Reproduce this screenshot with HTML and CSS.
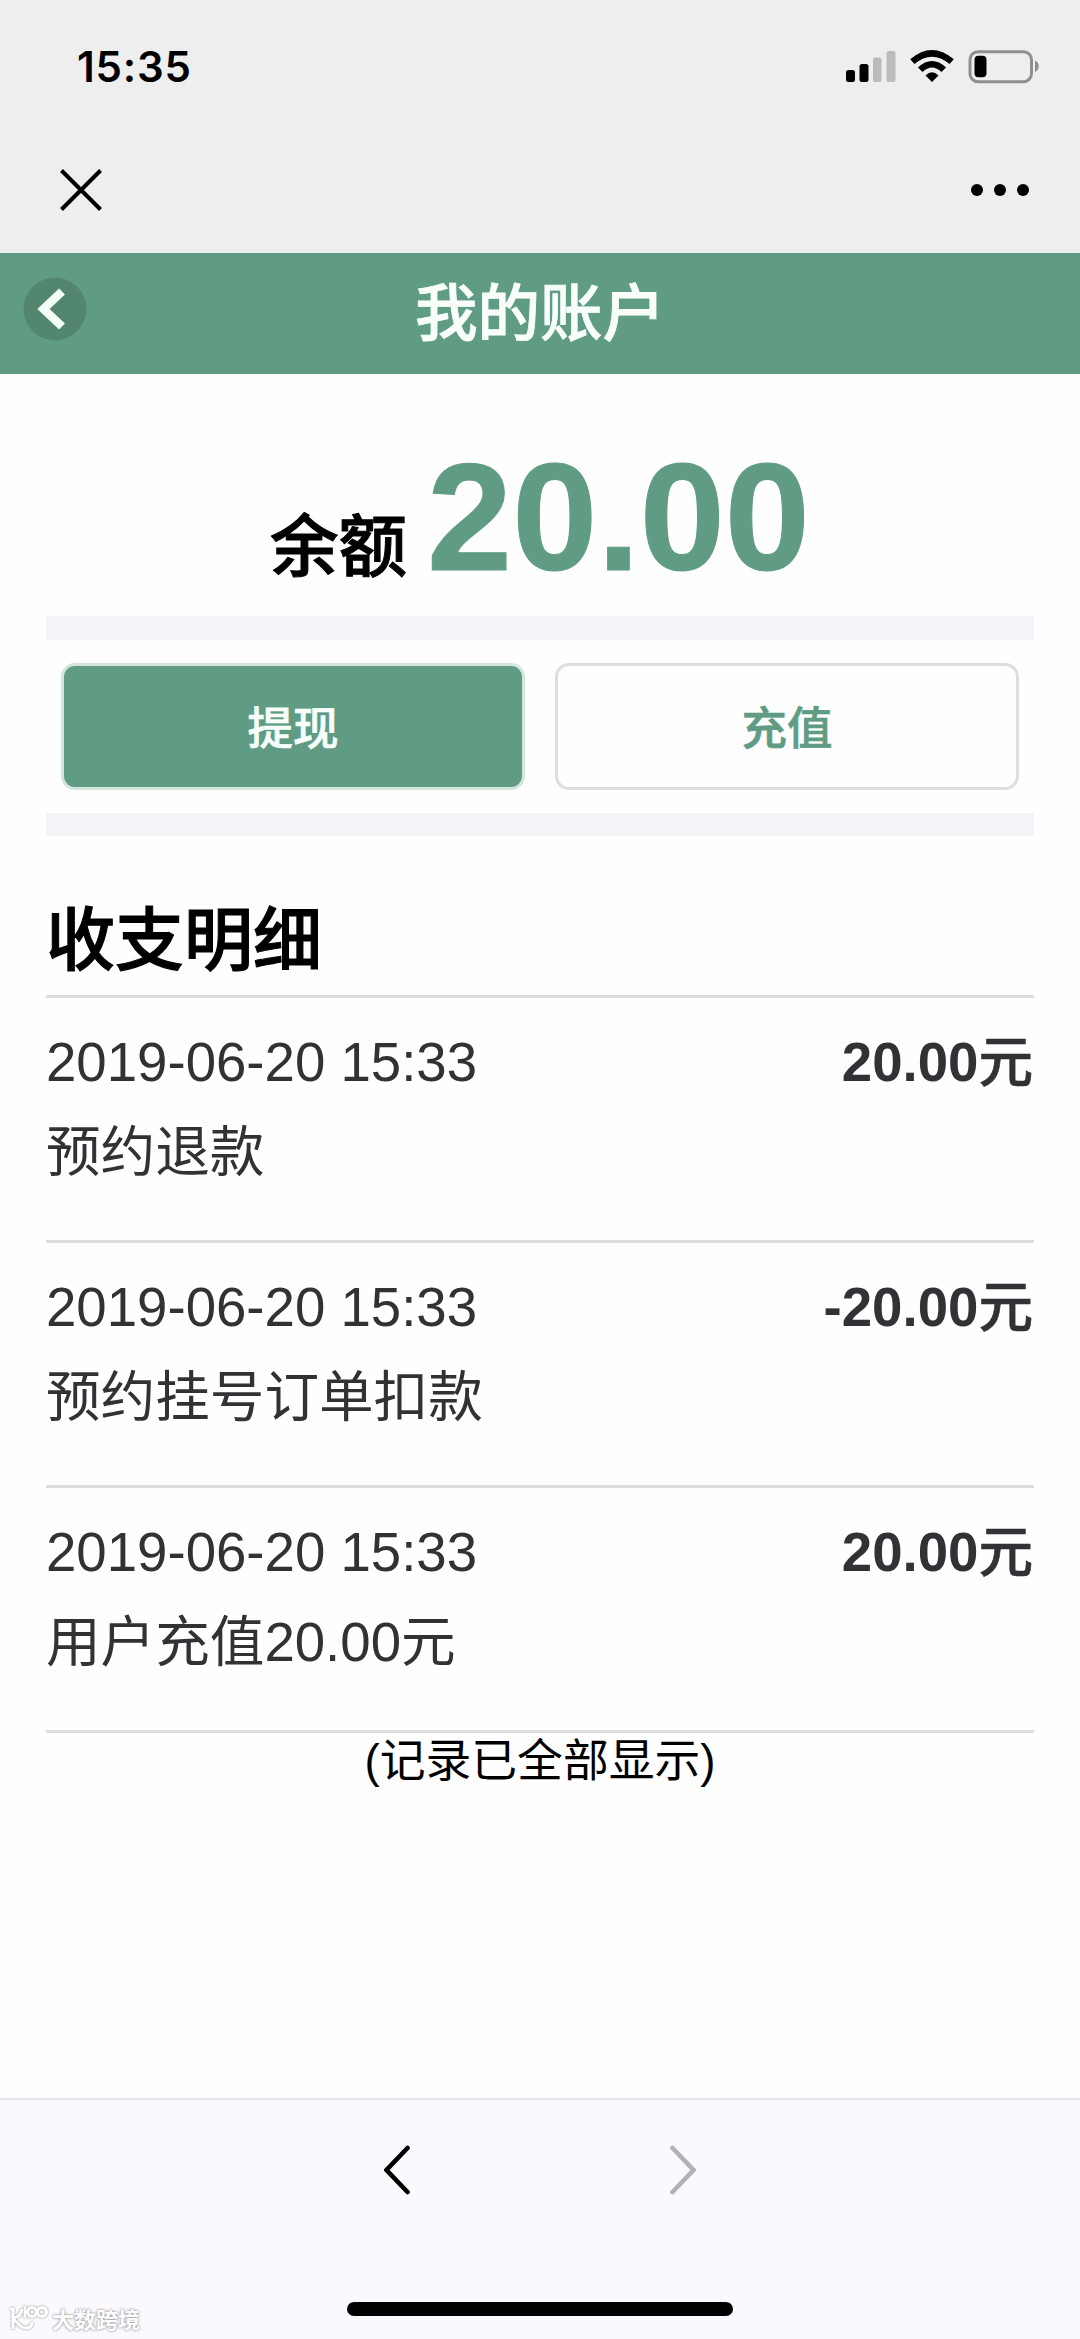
FILE: index.html
```html
<!DOCTYPE html>
<html lang="zh-CN">
<head>
<meta charset="utf-8">
<title>我的账户</title>
<link rel="stylesheet" href="styles.css">
</head>
<body>
<div class="screen">
  <div class="statusbar">
    <span class="clock">15:35</span>
    <svg class="status-icons" width="196" height="36" viewBox="0 0 196 36">
      <rect x="2" y="21" width="9" height="12" rx="2.5"/>
      <rect x="15.500" y="15" width="9" height="18" rx="2.500"/>
      <rect x="29" y="8.500" width="8.500" height="24.500" rx="2" fill="#bcbcbc"/>
      <rect x="42.500" y="2" width="9" height="31" rx="2" fill="#bcbcbc"/>
      <path d="M66.200 10.300Q88 -8.300 109.800 10.300L105.500 15Q88 0.500 70.500 15Z"/>
      <path d="M74 18.500Q88 5.600 102 18.500L97.500 23Q88 14 78.500 23Z"/>
      <path d="M81.500 26.500Q88 20 94.500 26.500L88 33Z"/>
      <rect x="126" y="2.700" width="61.500" height="30" rx="8" fill="none" stroke="#8f8f8f" stroke-width="3"/>
      <rect x="130.500" y="6.800" width="12" height="21.500" rx="4"/>
      <path d="M191 11.500C196 13.500 196 21 191 23Z" fill="#8f8f8f"/>
    </svg>
  </div>
  <div class="navbar">
    <svg width="44" height="44" viewBox="0 0 44 44"><path d="M2.500 2.500L41.500 41.500M41.500 2.500L2.500 41.500" fill="none" stroke="#000" stroke-width="4"/></svg>
    <svg width="60" height="14" viewBox="0 0 60 14"><circle cx="7" cy="7" r="6"/><circle cx="30" cy="7" r="6"/><circle cx="53" cy="7" r="6"/></svg>
  </div>
  <header class="titlebar">
    <svg class="back" width="64" height="64" viewBox="0 0 64 64"><circle cx="32" cy="32" r="31.500" fill="#52866f"/><path d="M39 14.500L20.500 32L39 49.500" fill="none" stroke="#f5fff9" stroke-width="8.500"/></svg>
    <h1 class="title">我的账户</h1>
  </header>
  <main class="content">
    <div class="balance"><span class="balance-label">余额</span><span class="balance-value">20.00</span></div>
    <div class="actions">
      <button class="btn btn-primary">提现</button>
      <button class="btn">充值</button>
    </div>
    <h2 class="section-title">收支明细</h2>
    <ul class="records">
      <li class="record"><div class="record-top"><span>2019-06-20 15:33</span><b>20.00<span class="unit">元</span></b></div><div class="record-desc">预约退款</div></li>
      <li class="record"><div class="record-top"><span>2019-06-20 15:33</span><b>-20.00<span class="unit">元</span></b></div><div class="record-desc">预约挂号订单扣款</div></li>
      <li class="record"><div class="record-top"><span>2019-06-20 15:33</span><b>20.00<span class="unit">元</span></b></div><div class="record-desc">用户充值20.00元</div></li>
    </ul>
    <p class="end">(记录已全部显示)</p>
  </main>
  <footer class="toolbar">
    <div class="arrows">
      <svg width="26" height="50" viewBox="0 0 26 50"><path d="M23.500 3L2.500 25L23.500 47" fill="none" stroke="#000" stroke-width="4.600" stroke-linecap="round"/></svg>
      <svg width="26" height="50" viewBox="0 0 26 50"><path d="M2.500 3L23.500 25L2.500 47" fill="none" stroke="#b3b1b4" stroke-width="4.600" stroke-linecap="round"/></svg>
    </div>
    <div class="home"></div>
    <div class="watermark">
      <svg width="40" height="28" viewBox="0 0 40 28" fill="none" stroke="#fff" stroke-width="3"><path d="M1 5H4V25M13 5Q12 13 4 14Q11 24 17 24T23 18M16 2V14"/><circle cx="23" cy="8" r="4.500"/><circle cx="33" cy="8" r="4.500"/></svg>
      <span>大数跨境</span>
    </div>
  </footer>
</div>
</body>
</html>
```
FILE: styles.css
```css
* { box-sizing: border-box; }
body { margin: 0; background: #fefefe; color: #000; font-family: "Liberation Sans", "Noto Sans CJK SC", sans-serif; }
h1, h2, p, ul { margin: 0; padding: 0; }
svg { display: block; flex: none; }
.screen { width: 1080px; height: 2339px; display: flex; flex-direction: column; overflow: hidden; }
.statusbar { height: 133px; background: #eee; display: flex; justify-content: space-between; align-items: flex-start; padding: 49px 40px 0 77px; }
.clock { font: 600 42px/36px Inter, sans-serif; letter-spacing: 0.8px; }
.navbar { height: 120px; background: #eee; display: flex; justify-content: space-between; align-items: center; padding: 0 50px 6px 59px; }
.titlebar { height: 121px; background: #609c84; display: grid; grid-template-columns: 64px 1fr 64px; align-items: center; padding: 0 23px; }
.back { margin-bottom: 10px; }
.title { font-size: 62.500px; line-height: 80px; font-weight: 500; -webkit-text-stroke: 0.8px #f8fffb; color: #f8fffb; text-align: center; }
.content { flex: 1; padding: 0 46px; }
.balance { height: 266px; border-bottom: 24px solid #f5f3f7; display: flex; justify-content: center; align-items: baseline; gap: 20px; padding-top: 55px; white-space: nowrap; }
.balance-label { font-size: 68.500px; line-height: 80px; font-weight: 500; -webkit-text-stroke: 1px #000; position: relative; top: 1px; }
.balance-value { font-size: 153px; line-height: 176px; font-weight: 700; color: #609c84; -webkit-text-stroke: 1px #609c84; }
.actions { height: 196px; border-bottom: 23px solid #f5f3f7; padding: 23px 15px; display: grid; grid-template-columns: 1fr 1fr; gap: 30px; }
.btn { height: 127px; border: 3px solid #dfdde0; border-radius: 14px; background: #fefefe; color: #609c84; font: 500 45.500px/60px "Liberation Sans", "Noto Sans CJK SC", sans-serif; -webkit-text-stroke: 0.6px currentColor; padding: 6px 0 0; }
.btn-primary { background: #609c84; border-color: #d3e6dd; color: #f8fffb; }
.section-title { height: 162px; padding-top: 61px; border-bottom: 3px solid #dcdcdd; font-size: 69px; line-height: 90px; font-weight: 500; -webkit-text-stroke: 1px #000; }
.records { list-style: none; color: #333136; font-size: 54.600px; }
.record { height: 245px; border-bottom: 3px solid #dddcdf; padding-top: 23px; }
.record-top { display: flex; justify-content: space-between; height: 87px; line-height: 84px; }
.record-top b { margin-right: 1px; }
.unit { font-weight: 500; -webkit-text-stroke: 0.6px currentColor; }
.record-desc { height: 90px; line-height: 90px; }
.end { font-size: 45.800px; line-height: 58px; text-align: center; }
.toolbar { height: 241px; background: #fbf9fd; border-top: 2px solid #e6e4e8; position: relative; display: flex; flex-direction: column; align-items: center; padding-top: 45px; }
.arrows { width: 312px; display: flex; justify-content: space-between; }
.home { width: 386px; height: 14px; border-radius: 7px; background: #000; margin-top: 107px; }
.watermark { position: absolute; left: 9px; bottom: 7px; display: flex; align-items: center; gap: 3px; color: #fff; font: 700 22px/28px "Noto Sans CJK SC", sans-serif; text-shadow: 0 0 2px #999, 0 0 3px #aaa; }
.watermark svg { filter: drop-shadow(0 0 1px #888); }
```
